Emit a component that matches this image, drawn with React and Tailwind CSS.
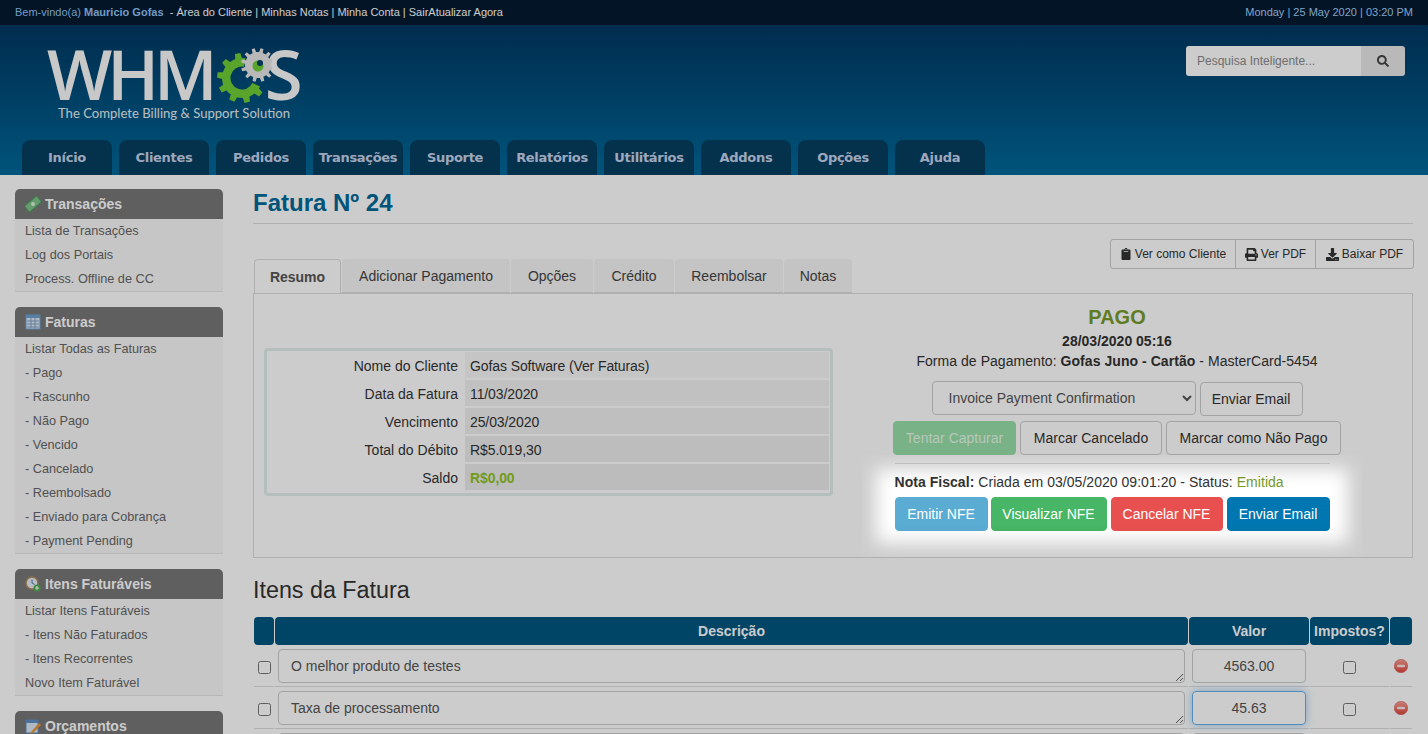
import { FaClipboard, FaPrint, FaDownload, FaSearch } from "react-icons/fa";

const NAV_TABS = ["Início", "Clientes", "Pedidos", "Transações", "Suporte", "Relatórios", "Utilitários", "Addons", "Opções", "Ajuda"];

const MoneyIcon = () => (
    <svg width="16" height="16" viewBox="0 0 16 16">
        <g transform="rotate(-40 8 8)">
            <rect x="0" y="4" width="16" height="8" fill="#7fc28a" stroke="#4f9a5c" strokeWidth="1" />
            <circle cx="8" cy="8" r="2" fill="#d7f0d8" />
        </g>
    </svg>
);

const GridIcon = () => (
    <svg width="16" height="16" viewBox="0 0 16 16">
        <rect x="1" y="1" width="14" height="14" fill="#dce9f7" stroke="#6f9fd0" />
        <rect x="1" y="1" width="14" height="3" fill="#6f9fd0" />
        <path d="M2 7h12M2 10h12M2 13h12M6 4v10M10 4v10" stroke="#7f9fc0" strokeWidth="1" />
    </svg>
);

const ClockIcon = () => (
    <svg width="16" height="16" viewBox="0 0 16 16">
        <circle cx="7" cy="7" r="6" fill="#e6edf5" stroke="#b08a5a" strokeWidth="1.5" />
        <path d="M7 3.5V7l2.5 1.5" stroke="#4f7fb0" strokeWidth="1" fill="none" />
        <circle cx="12" cy="12" r="3.5" fill="#4fae4f" />
        <path d="M10 12h4M12 10v4" stroke="#fff" strokeWidth="1" />
    </svg>
);

const QuoteIcon = () => (
    <svg width="16" height="16" viewBox="0 0 16 16">
        <rect x="1" y="2" width="12" height="13" fill="#dce9f7" stroke="#5f8fc8" />
        <rect x="1" y="2" width="12" height="3" fill="#5f8fc8" />
        <path d="M6 14l8-9 2 2-8 8-3 1z" fill="#e8963a" />
    </svg>
);

const SIDEBAR = [
    { title: "Transações", icon: <MoneyIcon />, links: ["Lista de Transações", "Log dos Portais", "Process. Offline de CC"] },
    {
        title: "Faturas",
        icon: <GridIcon />,
        links: ["Listar Todas as Faturas", "- Pago", "- Rascunho", "- Não Pago", "- Vencido", "- Cancelado", "- Reembolsado", "- Enviado para Cobrança", "- Payment Pending"],
    },
    { title: "Itens Faturáveis", icon: <ClockIcon />, links: ["Listar Itens Faturáveis", "- Itens Não Faturados", "- Itens Recorrentes", "Novo Item Faturável"] },
    { title: "Orçamentos", icon: <QuoteIcon />, links: [] },
];

const INVOICE_TABS = [
    { label: "Adicionar Pagamento", width: "w-[168px]" },
    { label: "Opções", width: "w-[82px]" },
    { label: "Crédito", width: "w-[80px]" },
    { label: "Reembolsar", width: "w-[108px]" },
    { label: "Notas", width: "w-[68px]" },
];

const INFO_ROWS = [
    { label: "Nome do Cliente", value: "Gofas Software (Ver Faturas)", bg: "bg-[#f7f7f7]" },
    { label: "Data da Fatura", value: "11/03/2020", bg: "bg-[#f2f2f2]" },
    { label: "Vencimento", value: "25/03/2020", bg: "bg-[#efefef]" },
    { label: "Total do Débito", value: "R$5.019,30", bg: "bg-[#ededed]" },
    { label: "Saldo", value: "R$0,00", bg: "bg-[#ebebeb]", paid: true },
];

const ITEMS = [
    { description: "O melhor produto de testes", amount: "4563.00" },
    { description: "Taxa de processamento", amount: "45.63", focused: true },
    { description: "", amount: "" },
];

// Gear outline: teeth along the outside, plain arc back on the inside
const gearArc = (cx, cy, outer, root, hole, teeth, from, to) => {
    const rad = (d) => (d * Math.PI) / 180;
    const pt = (r, d) => `${(cx + r * Math.cos(rad(d))).toFixed(1)} ${(cy + r * Math.sin(rad(d))).toFixed(1)}`;
    const step = (to - from) / teeth;
    let d = `M${pt(root, from)}`;
    for (let i = 0; i < teeth; i++) {
        const a = from + i * step;
        d += `L${pt(root, a + step * 0.18)}L${pt(outer, a + step * 0.28)}L${pt(outer, a + step * 0.62)}L${pt(root, a + step * 0.72)}L${pt(root, a + step)}`;
    }
    d += `L${pt(hole, to)}`;
    d += `A${hole} ${hole} 0 ${to - from > 180 ? 1 : 0} 0 ${pt(hole, from)}Z`;
    return d;
};

const Logo = () => (
    <div className="ml-[47px] mt-[19px] w-[260px] text-[#fafafa]">
        <div className="flex h-[58px] items-center font-['Open_Sans',sans-serif] text-[69px] font-semibold leading-[58px] tracking-[-5px]">
            <span>WHM</span>
            <svg width="60" height="60" viewBox="0 0 60 60" className="relative z-10 -ml-[1px] shrink-0">
                <path d={gearArc(30, 35, 25, 20, 11.5, 7, 25, 280)} fill="#70ce35" />
                <path d={gearArc(46, 22, 17, 13, 7.5, 12, 0, 359.9)} fill="#e6e6e6" fillRule="evenodd" />
                <circle cx="46" cy="22" r="7.5" fill="#e6e6e6" />
                <circle cx="46" cy="23" r="5.5" fill="#70ce35" />
                <circle cx="48" cy="20" r="3" fill="#06406c" />
            </svg>
            <span className="-ml-[7px]">S</span>
        </div>
        <div className="ml-[11px] mt-[2px] whitespace-nowrap font-['Lato',sans-serif] text-[13.1px] leading-[18px] text-[#e8eef2]">
            The Complete Billing &amp; Support Solution
        </div>
    </div>
);

const Btn = ({ children, className = "" }) => (
    <button className={`h-[34px] whitespace-nowrap rounded-[4px] border text-[14px] ${className}`}>{children}</button>
);

const SidebarBox = ({ title, icon, links }) => (
    <div className="mb-[15px]">
        <div className="flex h-[30px] items-center gap-[4px] rounded-t-[5px] bg-[#777777] pl-[10px] text-[14px] font-bold text-white">
            {icon}
            <span>{title}</span>
        </div>
        <div className="border-b border-[#e6e6e6] bg-[#f8f8f8] pl-[10px]">
            {links.map((link) => (
                <div key={link} className="h-6 text-[12.7px] leading-6 text-[#666666]">
                    {link}
                </div>
            ))}
        </div>
    </div>
);

const RedMinus = () => (
    <svg width="14" height="14" viewBox="0 0 14 14">
        <defs>
            <linearGradient id="redOrb" x1="0" y1="0" x2="0" y2="1">
                <stop offset="0" stopColor="#f7a096" />
                <stop offset="1" stopColor="#e0453e" />
            </linearGradient>
        </defs>
        <circle cx="7" cy="7" r="6.75" fill="url(#redOrb)" stroke="#cf5a52" strokeWidth="0.5" />
        <rect x="3" y="5.8" width="8" height="2.4" rx="1" fill="#fbe6e4" />
    </svg>
);

const App = () => {
    return (
        <div className="h-screen overflow-hidden bg-white font-['Liberation_Sans',Arial,sans-serif] text-[#333333]">
            {/* Top bar */}
            <div className="flex h-[25px] items-center justify-between bg-[#031a30] px-[15px] text-[11px] text-white">
                <div>
                    <span className="text-[#92c0f0]">
                        Bem-vindo(a) <b>Mauricio Gofas</b>
                    </span>
                    <span> &nbsp;- Área do Cliente | Minhas Notas | Minha Conta | SairAtualizar Agora</span>
                </div>
                <div className="text-[#a4cdf5]">Monday | 25 May 2020 | 03:20 PM</div>
            </div>

            {/* Header */}
            <div className="flex h-[150px] flex-col justify-between bg-linear-to-b from-[#003862] to-[#00699b]">
                <div className="flex justify-between">
                    <Logo />
                    <div className="mr-[23px] mt-[21px] flex h-[30px] w-[219px] overflow-hidden rounded-[3px] text-[12px]">
                        <input placeholder="Pesquisa Inteligente..." className="w-[175px] bg-white px-[11px] placeholder:text-[#8a8a8a]" />
                        <div className="flex w-[44px] items-center justify-center bg-[#e8e8e8] text-[#444444]">
                            <FaSearch size={12} />
                        </div>
                    </div>
                </div>
                <div className="flex gap-[7px] pl-[22px]">
                    {NAV_TABS.map((tab) => (
                        <div
                            key={tab}
                            className="flex h-[35px] w-[90px] items-center justify-center rounded-t-[8px] bg-[#053f60] font-['DejaVu_Sans',sans-serif] text-[13px] font-bold tracking-[-0.3px] text-[#c6d3ec]"
                        >
                            {tab}
                        </div>
                    ))}
                </div>
            </div>

            <div className="flex">
                {/* Sidebar */}
                <div className="ml-[15px] mt-[14px] w-[208px] shrink-0">
                    {SIDEBAR.map((box) => (
                        <SidebarBox key={box.title} {...box} />
                    ))}
                </div>

                {/* Main */}
                <div className="ml-[30px] w-[1160px]">
                    <h1 className="mt-[14px] h-[35px] border-b border-[#dddddd] text-[24px] font-bold leading-[28px] text-[#006a99]">
                        Fatura Nº 24
                    </h1>

                    <div className="flex h-[69px] items-end justify-between">
                        <div className="flex h-[34px] gap-[1px] text-[14px]">
                            <div className="ml-[1px] flex w-[87px] items-center justify-center rounded-t-[4px] border border-b-0 border-[#dddddd] bg-white pt-[1px] font-bold text-[#555555]">
                                Resumo
                            </div>
                            {INVOICE_TABS.map((tab) => (
                                <div key={tab.label} className={`flex items-center justify-center rounded-t-[4px] border-b border-[#dddddd] bg-[#f5f5f5] pt-[1px] text-[#444444] ${tab.width}`}>
                                    {tab.label}
                                </div>
                            ))}
                        </div>
                        <div className="-mr-[1px] mb-[24px] flex h-[30px] rounded-[3px] border border-[#cccccc] bg-white text-[12px] text-[#333333]">
                            <div className="flex w-[124px] items-center justify-center gap-[3px]">
                                <FaClipboard size={12} /> Ver como Cliente
                            </div>
                            <div className="flex w-[80px] items-center justify-center gap-[3px] border-l border-[#cccccc]">
                                <FaPrint size={13} /> Ver PDF
                            </div>
                            <div className="flex w-[98px] items-center justify-center gap-[3px] border-l border-[#cccccc]">
                                <FaDownload size={13} /> Baixar PDF
                            </div>
                        </div>
                    </div>

                    {/* Summary panel */}
                    <div className="flex h-[265px] w-full border border-[#dddddd] pl-[10px] text-[14px]">
                        <div className="mt-[54px] h-[148px] w-[569px] rounded-[4px] border-[3px] border-[#e2eeeb] text-[14px]">
                            <div className="flex flex-col gap-[2px] p-[1px]">
                                {INFO_ROWS.map((row) => (
                                    <div key={row.label} className="flex h-[26px] items-center">
                                        <div className="w-[197px] pr-[7px] pt-[2px] text-right text-[#333333]">{row.label}</div>
                                        <div className={`flex h-full flex-1 items-center pl-[5px] pt-[2px] tracking-[-0.1px] ${row.bg} ${row.paid ? "font-bold text-[#8fc31f]" : ""}`}>
                                            {row.value}
                                        </div>
                                    </div>
                                ))}
                            </div>
                        </div>

                        <div className="ml-[10px] mr-[21px] flex flex-1 flex-col items-center">
                            <div className="mt-[10px] text-[20px] font-bold leading-[26px] text-[#779b2a]">PAGO</div>
                            <div className="mt-[1px] font-bold leading-[20px]">28/03/2020 05:16</div>
                            <div className="leading-[20px] tracking-[0.05px]">
                                Forma de Pagamento: <b>Gofas Juno - Cartão</b> - MasterCard-5454
                            </div>
                            <div className="mt-[10px] flex items-start gap-[4px]">
                                <select className="h-[34px] w-[264px] rounded-[4px] border border-[#cccccc] px-3 text-[14px] text-[#555555]">
                                    <option>Invoice Payment Confirmation</option>
                                </select>
                                <Btn className="mt-[1px] w-[103px] border-[#cccccc] bg-white">Enviar Email</Btn>
                            </div>
                            <div className="mt-[5px] flex gap-[4px]">
                                <Btn className="w-[123px] border-[#96dfa8] bg-[#96dfa8] text-[#e4f9ea]">Tentar Capturar</Btn>
                                <Btn className="w-[142px] border-[#cccccc] bg-white">Marcar Cancelado</Btn>
                                <Btn className="w-[175px] border-[#cccccc] bg-white">Marcar como Não Pago</Btn>
                            </div>

                            {/* Highlighted block stays undimmed, soft edge comes from the inset shadow */}
                            <div className="relative -ml-[10px] mt-[8px] w-[435px]">
                                <div className="absolute -bottom-[26px] -left-[33px] -right-[32px] -top-[8px] z-10 shadow-[0_0_0_3000px_rgba(0,0,0,0.2),inset_0_0_18px_14px_rgba(0,0,0,0.2)]" />
                                <div className="whitespace-nowrap border-t border-[#dddddd] pt-[8px] leading-[20px] tracking-[0.04px]">
                                    <b>Nota Fiscal:</b> Criada em 03/05/2020 09:01:20 - Status: <span className="text-[#779b2a]">Emitida</span>
                                </div>
                                <div className="mt-[5px] flex gap-[3px] text-white">
                                    <Btn className="w-[93px] border-[#5bacd3] bg-[#5bacd3]">Emitir NFE</Btn>
                                    <Btn className="w-[116px] border-[#47b666] bg-[#47b666]">Visualizar NFE</Btn>
                                    <Btn className="ml-[1px] w-[112px] border-[#e85050] bg-[#e85050]">Cancelar NFE</Btn>
                                    <Btn className="ml-[1px] w-[103px] border-[#0077b0] bg-[#0077b0]">Enviar Email</Btn>
                                </div>
                            </div>
                        </div>
                    </div>

                    {/* Items */}
                    <h2 className="mt-[18px] h-[41px] text-[23.3px] font-normal leading-[28px] text-[#333333]">Itens da Fatura</h2>
                    <div className="ml-[1px] grid w-[1158px] grid-cols-[20px_913px_120px_79px_22px] gap-[1px] text-[14px]">
                        <div className="h-[28px] rounded-[4px] bg-[#005580]" />
                        <div className="flex h-[28px] items-center justify-center rounded-[4px] bg-[#005580] font-bold text-white">Descrição</div>
                        <div className="flex h-[28px] items-center justify-center rounded-[4px] bg-[#005580] font-bold text-white">Valor</div>
                        <div className="flex h-[28px] items-center justify-center rounded-[4px] bg-[#005580] font-bold text-white">Impostos?</div>
                        <div className="h-[28px] rounded-[4px] bg-[#005580]" />

                        {ITEMS.map((item, i) => (
                            <div key={i} className="contents">
                                <div className="flex h-[41px] items-center justify-center border-b border-[#dddddd] pt-[2px]">
                                    <input type="checkbox" className="h-[13px] w-[13px]" />
                                </div>
                                <div className="h-[41px] border-b border-[#dddddd] px-[3px] pt-[3px]">
                                    <textarea
                                        defaultValue={item.description}
                                        className="block h-[34px] w-full rounded-[4px] border border-[#cccccc] px-3 py-[6px] text-[14px] leading-[20px] text-[#555555]"
                                    />
                                </div>
                                <div className="h-[41px] border-b border-[#dddddd] px-[3px] pt-[3px]">
                                    <input
                                        defaultValue={item.amount}
                                        className={`block h-[34px] w-full rounded-[4px] border text-center text-[14px] text-[#555555] ${
                                            item.focused ? "border-[#66afe9] shadow-[0_0_8px_rgba(102,175,233,0.6)]" : "border-[#cccccc]"
                                        }`}
                                    />
                                </div>
                                <div className="flex h-[41px] items-center justify-center border-b border-[#dddddd] pt-[2px]">
                                    <input type="checkbox" className="h-[13px] w-[13px]" />
                                </div>
                                <div className="flex h-[41px] items-center justify-center border-b border-[#dddddd]">
                                    <RedMinus />
                                </div>
                            </div>
                        ))}
                    </div>
                </div>
            </div>
        </div>
    );
};

export default App;
